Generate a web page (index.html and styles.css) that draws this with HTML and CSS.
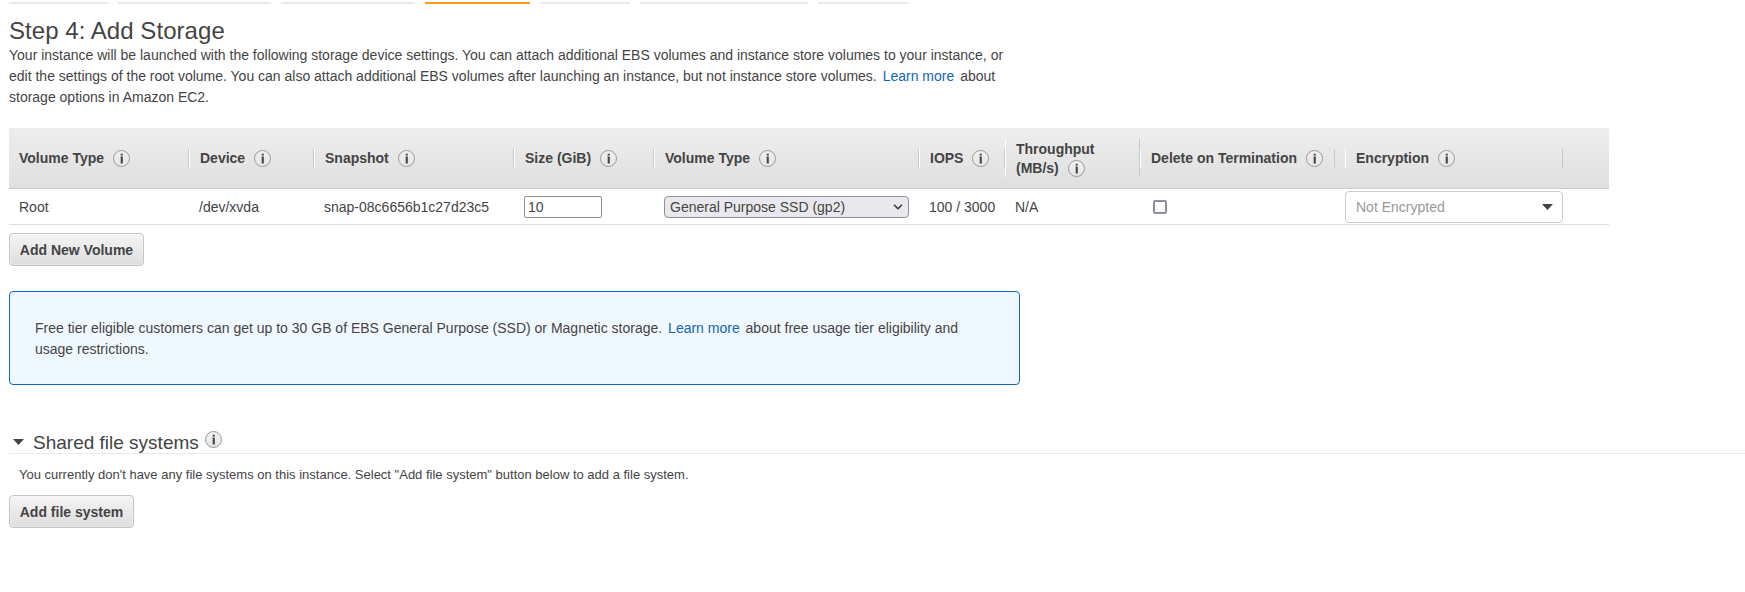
FILE: index.html
```html
<!DOCTYPE html>
<html lang="en">
<head>
<meta charset="utf-8">
<title>Step 4: Add Storage</title>
<link rel="stylesheet" href="styles.css">
</head>
<body>
<svg class="defs" width="0" height="0">
  <defs>
    <linearGradient id="info-fill" x1="0" y1="0" x2="0" y2="1"><stop offset="0" stop-color="#f0f0f0"/><stop offset="1" stop-color="#e6e6e6"/></linearGradient>
    <symbol id="info" viewBox="0 0 17 17">
      <circle cx="8.5" cy="8.5" r="8" fill="url(#info-fill)" stroke="#999"/>
      <path d="M7.700 3.800h2.100v1.800H7.700zM7.700 6.500h2.100v7H7.700z" fill="#444"/>
      <path d="M7 6.500h.7v1H7z" fill="#999"/>
    </symbol>
  </defs>
</svg>
<nav class="steps"><i></i><i></i><i></i><i class="active"></i><i></i><i></i><i></i></nav>
<main>
  <h1>Step 4: Add Storage</h1>
  <p class="intro">Your instance will be launched with the following storage device settings. You can attach additional EBS volumes and instance store volumes to your instance, or<br>edit the settings of the root volume. You can also attach additional EBS volumes after launching an instance, but not instance store volumes. <a>Learn more</a> about<br>storage options in Amazon EC2.</p>
  <section class="volumes">
    <div class="row head">
      <div class="first"><span>Volume Type</span><svg class="info"><use href="#info"/></svg></div>
      <div><span>Device</span><svg class="info"><use href="#info"/></svg></div>
      <div><span>Snapshot</span><svg class="info"><use href="#info"/></svg></div>
      <div><span>Size (GiB)</span><svg class="info"><use href="#info"/></svg></div>
      <div><span>Volume Type</span><svg class="info"><use href="#info"/></svg></div>
      <div><span>IOPS</span><svg class="info"><use href="#info"/></svg></div>
      <div class="tall"><span>Throughput</span><div class="second-line"><span>(MB/s)</span><svg class="info"><use href="#info"/></svg></div></div>
      <div><span>Delete on Termination</span><svg class="info"><use href="#info"/></svg></div>
      <div class="encryption"><span>Encryption</span><svg class="info"><use href="#info"/></svg></div>
    </div>
    <div class="row body">
      <div>Root</div>
      <div>/dev/xvda</div>
      <div>snap-08c6656b1c27d23c5</div>
      <div><div class="size">10</div></div>
      <div><div class="select">General Purpose SSD (gp2)<svg class="chevron" width="10" height="6" viewBox="0 0 10 6"><path d="M1 .8 5 4.800 9 .8" fill="none" stroke="#333" stroke-width="1.500"/></svg></div></div>
      <div>100 / 3000</div>
      <div>N/A</div>
      <div><div class="check"></div></div>
      <div class="encryption"><div class="combo"><span>Not Encrypted</span><svg class="caret" width="11" height="6" viewBox="0 0 11 6"><path d="M0 0h11L5.500 6z" fill="#444"/></svg></div></div>
    </div>
  </section>
  <div class="button add-volume">Add New Volume</div>
  <div class="notice">Free tier eligible customers can get up to 30 GB of EBS General Purpose (SSD) or Magnetic storage. <a>Learn more</a> about free usage tier eligibility and<br>usage restrictions.</div>
  <section class="shared">
    <header>
      <svg class="caret" width="11" height="6" viewBox="0 0 11 6"><path d="M0 0h11L5.500 6z" fill="#444"/></svg>
      <h2>Shared file systems</h2>
      <svg class="info"><use href="#info"/></svg>
    </header>
    <p>You currently don't have any file systems on this instance. Select "Add file system" button below to add a file system.</p>
    <div class="button add-fs">Add file system</div>
  </section>
</main>
</body>
</html>
```

FILE: styles.css
```css
* { box-sizing: border-box; }
body { margin: 0; height: 592px; overflow: hidden; background: #fff; color: #444; font: 14px/21px "Liberation Sans", Arial, sans-serif; white-space: nowrap; }
.defs { display: block; }
main { padding-left: 9px; }
h1, h2, p { margin: 0; font-weight: normal; }
a { color: #1166bb; margin: 0 2px; }
.steps { display: grid; grid-template-columns: 99px 153px 134px 105px 90px 168px 90px; column-gap: 10px; padding: 2px 0 0 9px; height: 4px; }
.steps i { background: #eaeaea; }
.steps .active { background: #ff9914; }
h1 { height: 41px; padding-top: 13px; font-size: 24px; line-height: 28px; letter-spacing: .05px; }
.intro { height: 83px; }
.volumes { width: 1600px; }
.row { display: grid; grid-template-columns: 180px 125px 200px 140px 265px 86px 135px 195px 228px; }
.head { height: 61px; align-items: center; border-bottom: 1px solid #ccc; background: linear-gradient(#eee, #dfdfdf); font-weight: bold; line-height: 19px; }
.head > div { display: flex; align-items: center; height: 19px; padding-left: 10px; border-left: 1px solid #fff; border-right: 1px solid #c8c8c8; }
.head > .first { border-left: 0; }
.head > .tall { display: block; height: 38px; line-height: 21px; }
.second-line { display: flex; align-items: center; height: 17px; }
.info { width: 17px; height: 17px; margin-left: 9px; flex: none; }
.encryption { margin-left: 10px; }
.body { height: 36px; align-items: center; border-bottom: 1px solid #ddd; line-height: 22px; }
.body > div { padding-left: 10px; }
.body > .encryption { padding: 0; }
.size, .select { height: 22px; border: 1px solid #8f8f9d; padding-left: 3px; line-height: 20px; }
.size { width: 78px; border-radius: 2px; }
.select { width: 245px; border-radius: 4px; padding: 0 5px 0 5px; background: #e9e9ed; display: flex; align-items: center; justify-content: space-between; }
.check { width: 14px; height: 14px; margin-left: 3px; border: 2px solid #8f8f9d; border-radius: 2px; }
.combo { display: flex; align-items: center; justify-content: space-between; height: 32px; padding: 0 9px 0 10px; border: 1px solid #ccc; border-radius: 4px; color: #999; }
.combo span { padding-top: 1px; }
.button { height: 33px; border: 1px solid #c4c4c4; border-radius: 4px; background: linear-gradient(#f4f4f4, #dedede); box-shadow: inset 0 0 2px #fff; font-weight: bold; line-height: 32px; text-align: center; }
.add-volume { width: 135px; margin-top: 8px; }
.notice { width: 1011px; height: 94px; margin-top: 25px; padding: 26px 25px; border: 1px solid #1166bb; border-radius: 4px; background: #f0f8ff; }
.shared header { display: flex; height: 69px; padding: 46px 0 0 4px; border-bottom: 1px solid #eaeaea; }
.shared .caret { margin-top: 8px; }
.shared h2 { margin-left: 9px; font-size: 19px; line-height: 24px; }
.shared .info { margin-left: 6px; }
.shared p { padding: 10px 0 0 10px; height: 41px; font-size: 13px; line-height: 22px; }
.add-fs { width: 125px; }
```
